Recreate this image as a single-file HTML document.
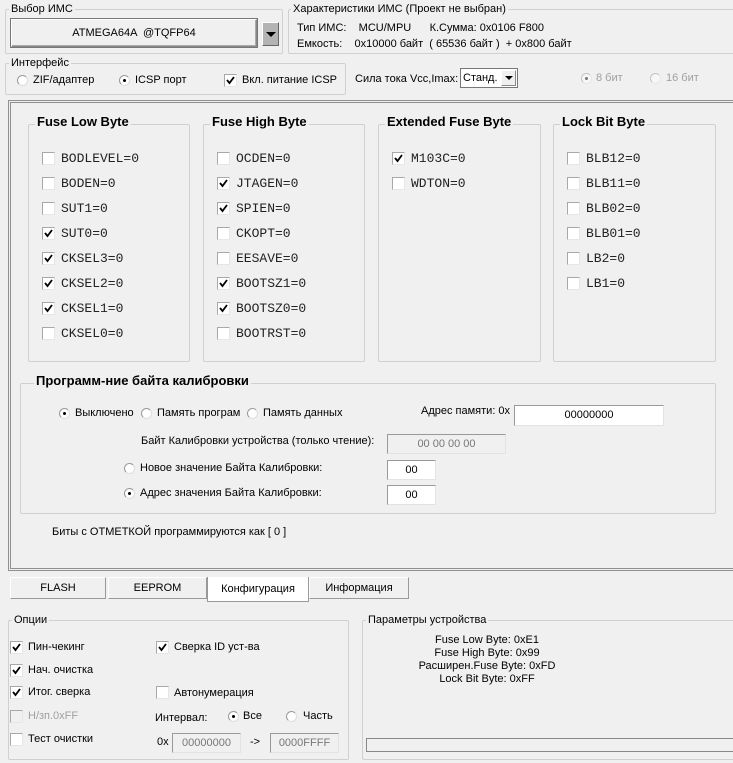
<!DOCTYPE html>
<html><head><meta charset="utf-8"><style>
*{box-sizing:border-box}
body{margin:0;width:733px;height:763px;background:#f0f0f0;font-family:"Liberation Sans",sans-serif;font-size:11px;color:#000;position:relative;overflow:hidden}
.a{position:absolute;white-space:nowrap}
.g{position:absolute;border:1px solid #d0d0d0;border-radius:2px}
.gt{position:absolute;top:-8px;left:6px;background:#f0f0f0;padding:0 2px;white-space:nowrap;line-height:14px}
.fb .gt{font-weight:bold;font-size:13px;top:-10px;left:6px}
.cb{position:absolute;width:13px;height:13px;background:#fff;border:1px solid #a8a8a8;border-right-color:#e6e6e6;border-bottom-color:#e6e6e6}
.cb.d{background:#f0f0f0}
.cb svg{position:absolute;left:1px;top:1px}
.m{font-family:"Liberation Mono",monospace;font-size:13px;color:#222}
.rb{position:absolute;width:11px;height:11px;border-radius:50%;background:#fff;border:1px solid #999;border-right-color:#ddd;border-bottom-color:#ddd}
.rb.on::after{content:"";position:absolute;left:3px;top:3px;width:3px;height:3px;border-radius:50%;background:#000}
.in{position:absolute;background:#fff;border:1px solid #999;border-right-color:#e3e3e3;border-bottom-color:#e3e3e3;text-align:center}
.tab{position:absolute;top:577px;height:22px;border:1px solid #999;border-top-color:#fff;border-left-color:#fff;text-align:center;line-height:20px;background:#f0f0f0}
</style></head><body>
<!-- top groups -->
<div class="g" style="left:5px;top:9px;width:278px;height:45px"><span class="gt" style="left:3px">Выбор ИМС</span></div>
<div class="a" style="left:11px;top:19px;width:246px;height:28px;border:1px solid #888;border-top-color:#fff;border-left-color:#fff;box-shadow:inset -1px -1px #aaa,0 0 0 1px #777;text-align:center;line-height:26px">ATMEGA64A &nbsp;@TQFP64</div>
<div class="a" style="left:262px;top:22px;width:17px;height:24px;background:#b4b4b4;border:1px solid #fff;border-right-color:#666;border-bottom-color:#666"><div style="position:absolute;left:3px;top:9px;width:0;height:0;border-left:5px solid transparent;border-right:5px solid transparent;border-top:5px solid #000"></div></div>
<div class="g" style="left:288px;top:9px;width:450px;height:45px"><span class="gt" style="left:2px">Характеристики ИМС (Проект не выбран)</span></div>
<div class="a" style="left:297px;top:22px">Тип ИМС: &nbsp;&nbsp; MCU/MPU &nbsp;&nbsp;&nbsp;&nbsp; К.Сумма: 0x0106 F800</div>
<div class="a" style="left:297px;top:38px">Емкость: &nbsp;&nbsp; 0x10000 байт &nbsp;( 65536 байт ) &nbsp;+ 0x800 байт</div>

<div class="g" style="left:5px;top:63px;width:341px;height:32px"><span class="gt" style="left:3px">Интерфейс</span></div>
<div class="rb" style="left:17px;top:75px"></div><div class="a" style="left:33px;top:74px">ZIF/адаптер</div>
<div class="rb on" style="left:119px;top:75px"></div><div class="a" style="left:135px;top:74px">ICSP порт</div>
<div class="cb" style="left:224px;top:74px"><svg width="9" height="9"><path d="M1 4 L3.5 7 L8 1" stroke="#000" stroke-width="1.8" fill="none"/></svg></div><div class="a" style="left:242px;top:74px">Вкл. питание ICSP</div>
<div class="a" style="left:355px;top:73px">Сила тока Vcc,Imax:</div>
<div class="a" style="left:460px;top:68px;width:58px;height:20px;background:#fff;border:1px solid #777;padding-left:2px;line-height:18px">Станд.</div>
<div class="a" style="left:501px;top:70px;width:15px;height:16px;background:#f0f0f0;border:1px solid #fff;border-right-color:#888;border-bottom-color:#888"><div style="position:absolute;left:3px;top:5px;border-left:4px solid transparent;border-right:4px solid transparent;border-top:4px solid #000"></div></div>
<div class="rb on" style="left:581px;top:73px;opacity:.5"></div><div class="a" style="left:596px;top:72px;color:#a0a0a0">8 бит</div>
<div class="rb" style="left:650px;top:73px;opacity:.5"></div><div class="a" style="left:666px;top:72px;color:#a0a0a0">16 бит</div>

<!-- main panel -->
<div class="a" style="left:8px;top:100px;width:735px;height:471px;border:3px double #909090;border-right:none;background:#f0f0f0"></div>

<div class="g fb" style="left:28px;top:124px;width:162px;height:238px"><span class="gt">Fuse Low Byte</span></div>
<div class="g fb" style="left:203px;top:124px;width:162px;height:238px"><span class="gt">Fuse High Byte</span></div>
<div class="g fb" style="left:378px;top:124px;width:163px;height:238px"><span class="gt">Extended Fuse Byte</span></div>
<div class="g fb" style="left:553px;top:124px;width:163px;height:238px"><span class="gt">Lock Bit Byte</span></div>

<div id="fuses"></div>

<div class="g fb" style="left:20px;top:383px;width:696px;height:131px"><span class="gt" style="left:13px">Программ-ние байта калибровки</span></div>
<div class="rb on" style="left:59px;top:408px"></div><div class="a" style="left:75px;top:407px">Выключено</div>
<div class="rb" style="left:141px;top:408px"></div><div class="a" style="left:157px;top:407px">Память програм</div>
<div class="rb" style="left:247px;top:408px"></div><div class="a" style="left:263px;top:407px">Память данных</div>
<div class="a" style="left:421px;top:405px">Адрес памяти: 0x</div>
<div class="in" style="left:514px;top:405px;width:150px;height:21px;line-height:19px">00000000</div>
<div class="a" style="left:141px;top:435px">Байт Калибровки устройства (только чтение):</div>
<div class="in" style="left:387px;top:434px;width:119px;height:20px;line-height:18px;background:#f0f0f0;color:#777">00 00 00 00</div>
<div class="rb" style="left:124px;top:463px"></div><div class="a" style="left:140px;top:462px">Новое значение Байта Калибровки:</div>
<div class="in" style="left:387px;top:460px;width:49px;height:20px;line-height:18px">00</div>
<div class="rb on" style="left:124px;top:488px"></div><div class="a" style="left:140px;top:487px">Адрес значения Байта Калибровки:</div>
<div class="in" style="left:387px;top:485px;width:49px;height:20px;line-height:18px">00</div>
<div class="a" style="left:52px;top:526px">Биты с ОТМЕТКОЙ программируются как [ 0 ]</div>

<!-- tabs -->
<div class="tab" style="left:10px;width:96px">FLASH</div>
<div class="tab" style="left:108px;width:99px">EEPROM</div>
<div class="tab" style="left:207px;width:102px;top:577px;height:25px;background:#fff;border-color:#999;border-top:none;line-height:24px">Конфигурация</div>
<div class="tab" style="left:309px;width:100px">Информация</div>

<!-- bottom -->
<div class="g" style="left:8px;top:620px;width:341px;height:140px"><span class="gt" style="left:3px">Опции</span></div>
<div class="g" style="left:362px;top:620px;width:380px;height:140px"><span class="gt" style="left:3px">Параметры устройства</span></div>
<div class="cb" style="left:10px;top:641px"><svg width="9" height="9"><path d="M1 4 L3.5 7 L8 1" stroke="#000" stroke-width="1.8" fill="none"/></svg></div><div class="a" style="left:28px;top:641px">Пин-чекинг</div>
<div class="cb" style="left:10px;top:664px"><svg width="9" height="9"><path d="M1 4 L3.5 7 L8 1" stroke="#000" stroke-width="1.8" fill="none"/></svg></div><div class="a" style="left:28px;top:664px">Нач. очистка</div>
<div class="cb" style="left:10px;top:686px"><svg width="9" height="9"><path d="M1 4 L3.5 7 L8 1" stroke="#000" stroke-width="1.8" fill="none"/></svg></div><div class="a" style="left:28px;top:686px">Итог. сверка</div>
<div class="cb d" style="left:10px;top:710px"></div><div class="a" style="left:28px;top:710px;color:#a0a0a0">Н/зп.0xFF</div>
<div class="cb" style="left:10px;top:733px"></div><div class="a" style="left:28px;top:733px">Тест очистки</div>
<div class="cb" style="left:156px;top:641px"><svg width="9" height="9"><path d="M1 4 L3.5 7 L8 1" stroke="#000" stroke-width="1.8" fill="none"/></svg></div><div class="a" style="left:174px;top:641px">Сверка ID уст-ва</div>
<div class="cb" style="left:156px;top:686px"></div><div class="a" style="left:174px;top:687px">Автонумерация</div>
<div class="a" style="left:155px;top:712px">Интервал:</div>
<div class="rb on" style="left:228px;top:711px"></div><div class="a" style="left:243px;top:710px">Все</div>
<div class="rb" style="left:286px;top:711px"></div><div class="a" style="left:303px;top:710px">Часть</div>
<div class="a" style="left:157px;top:736px">0x</div>
<div class="in" style="left:172px;top:733px;width:69px;height:20px;line-height:18px;background:#f0f0f0;color:#777">00000000</div>
<div class="a" style="left:250px;top:736px">-&gt;</div>
<div class="in" style="left:270px;top:733px;width:69px;height:20px;line-height:18px;background:#f0f0f0;color:#777">0000FFFF</div>
<div class="a" style="left:362px;top:634px;width:250px;text-align:center;line-height:13px">Fuse Low Byte: 0xE1<br>Fuse High Byte: 0x99<br>Расширен.Fuse Byte: 0xFD<br>Lock Bit Byte: 0xFF</div>
<div class="a" style="left:366px;top:738px;width:370px;height:14px;border:1px solid #888;border-right:none;background:#f0f0f0"></div>

<script>
var cols=[[42,[["BODLEVEL=0",0],["BODEN=0",0],["SUT1=0",0],["SUT0=0",1],["CKSEL3=0",1],["CKSEL2=0",1],["CKSEL1=0",1],["CKSEL0=0",0]]],
[217,[["OCDEN=0",0],["JTAGEN=0",1],["SPIEN=0",1],["CKOPT=0",0],["EESAVE=0",0],["BOOTSZ1=0",1],["BOOTSZ0=0",1],["BOOTRST=0",0]]],
[392,[["M103C=0",1],["WDTON=0",0]]],
[567,[["BLB12=0",0],["BLB11=0",0],["BLB02=0",0],["BLB01=0",0],["LB2=0",0],["LB1=0",0]]]];
var h="";
cols.forEach(function(c){c[1].forEach(function(it,i){var y=152+i*25;
h+='<div class="cb" style="left:'+c[0]+'px;top:'+y+'px">'+(it[1]?'<svg width="9" height="9"><path d="M1 4 L3.5 7 L8 1" stroke="#000" stroke-width="1.8" fill="none"/></svg>':'')+'</div>';
h+='<div class="a m" style="left:'+(c[0]+19)+'px;top:'+(y-1)+'px">'+it[0]+'</div>';});});
document.getElementById("fuses").innerHTML=h;
</script>
</body></html>
